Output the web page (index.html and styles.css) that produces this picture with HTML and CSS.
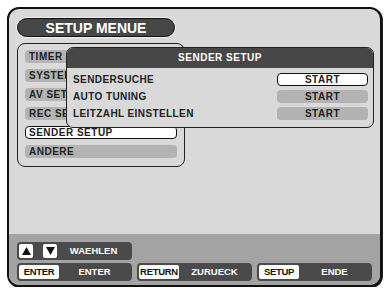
FILE: index.html
```html
<!DOCTYPE html>
<html lang="en">
<head>
  <meta charset="UTF-8" />
  <title>Setup Menue</title>
  <link rel="stylesheet" href="styles.css">
</head>
<body>
  <div class="screen">
    <div class="main">
      <div class="title">SETUP MENUE</div>

      <div class="menu">
        <div class="item"><span class="clip">TIMER</span></div>
        <div class="item"><span class="clip">SYSTEM</span></div>
        <div class="item"><span class="clip">AV SETUP</span></div>
        <div class="item"><span class="clip">REC SETUP</span></div>
        <div class="item active">SENDER SETUP</div>
        <div class="item">ANDERE</div>
      </div>
    </div>

    <!-- submenu overlays the main menu -->
    <div class="popup">
      <div class="popup-head">SENDER SETUP</div>
      <div class="popup-body">
        <div class="row">
          <span>SENDERSUCHE</span>
          <span class="btn active">START</span>
        </div>
        <div class="row">
          <span>AUTO TUNING</span>
          <span class="btn">START</span>
        </div>
        <div class="row">
          <span>LEITZAHL EINSTELLEN</span>
          <span class="btn">START</span>
        </div>
      </div>
    </div>

    <div class="footer">
      <div class="keys">
        <div class="pill">
          <span class="key arrow">
            <svg width="9" height="8" viewBox="0 0 9 8"><polygon points="4.5,0 9,8 0,8" fill="#111"/></svg>
          </span>
          <span class="key arrow second">
            <svg width="9" height="8" viewBox="0 0 9 8"><polygon points="0,0 9,0 4.5,8" fill="#111"/></svg>
          </span>
          <span class="label">WAEHLEN</span>
        </div>
      </div>
      <div class="keys">
        <div class="pill">
          <span class="key">ENTER</span>
          <span class="label">ENTER</span>
        </div>
        <div class="pill">
          <span class="key">RETURN</span>
          <span class="label">ZURUECK</span>
        </div>
        <div class="pill">
          <span class="key">SETUP</span>
          <span class="label">ENDE</span>
        </div>
      </div>
    </div>
  </div>
</body>
</html>
```

FILE: styles.css
```css
* {
  box-sizing: border-box;
}
body {
  margin: 0;
  background: #fff;
  font-family: 'Liberation Sans', Arial, sans-serif;
  font-weight: bold;
}
.screen {
  position: relative;
  margin: 7px 0 0 7px;
  width: 375px;
  height: 280px;
  border: 2px solid #111;
  border-radius: 12px;
  box-shadow: 1px 1px 0 #222;
  background: #d9d9d9;
  overflow: hidden;
  display: flex;
  flex-direction: column;
}
.main {
  flex: 1;
  padding: 9px 8px 0;
}
.title {
  width: 158px;
  height: 19px;
  line-height: 18px;
  background: #474747;
  border: 1px solid #111;
  border-radius: 10px;
  box-shadow: 0 0 0 1px #f0f0f0;
  color: #fff;
  font-size: 14px;
  text-align: center;
}
.menu {
  margin-top: 6px;
  width: 168px;
  height: 124px;
  border: 1.5px solid #222;
  border-radius: 8px;
  padding: 6px 7px;
  display: flex;
  flex-direction: column;
  gap: 6px;
}
.item {
  height: 13px;
  line-height: 13px;
  padding-left: 4px;
  background: #b3b3b3;
  border-radius: 4px;
  color: #222;
  font-size: 10px;
  letter-spacing: 0.5px;
  white-space: nowrap;
  overflow: hidden;
}
/* labels cut off where the submenu covers them */
.clip {
  display: inline-block;
  width: 37px;
  overflow: hidden;
  vertical-align: top;
}
.item.active {
  background: #fff;
  border: 1px solid #111;
  line-height: 11px;
  padding-left: 3px;
}
.popup {
  position: absolute;
  left: 57px;
  top: 38px;
  width: 308px;
  height: 81px;
  border: 1.5px solid #222;
  border-radius: 7px;
  background: #d9d9d9;
  overflow: hidden;
}
.popup-head {
  height: 20px;
  line-height: 20px;
  background: #474747;
  color: #fff;
  font-size: 10px;
  letter-spacing: 0.5px;
  text-align: center;
}
.popup-body {
  padding: 3px 5px 0 6px;
}
.row {
  height: 17px;
  display: flex;
  align-items: center;
  justify-content: space-between;
  color: #222;
  font-size: 10px;
  letter-spacing: 0.4px;
}
.btn {
  width: 91px;
  height: 13px;
  line-height: 13px;
  text-align: center;
  background: #b3b3b3;
  border-radius: 4px;
  letter-spacing: 0.5px;
}
.btn.active {
  background: #fff;
  border: 1px solid #111;
  line-height: 11px;
}
.footer {
  height: 51px;
  background: #a3a3a3;
  padding: 8px 8px 0;
  display: flex;
  flex-direction: column;
  gap: 3px;
}
.keys {
  display: grid;
  grid-template-columns: repeat(3, 1fr);
  gap: 5px;
}
.pill {
  height: 18px;
  background: #4a4a4a;
  border-radius: 4px;
  padding: 2px;
  display: flex;
  align-items: center;
}
.key {
  height: 14px;
  width: 40px;
  background: #fff;
  border-radius: 2px;
  color: #111;
  font-size: 9.5px;
  letter-spacing: -0.3px;
  line-height: 14px;
  text-align: center;
  white-space: nowrap;
}
.key.arrow {
  width: 14px;
  display: flex;
  align-items: center;
  justify-content: center;
}
.key.second {
  margin-left: 10px;
}
.label {
  flex: 1;
  line-height: 14px;
  text-align: center;
  color: #fff;
  font-size: 9.5px;
}
```
